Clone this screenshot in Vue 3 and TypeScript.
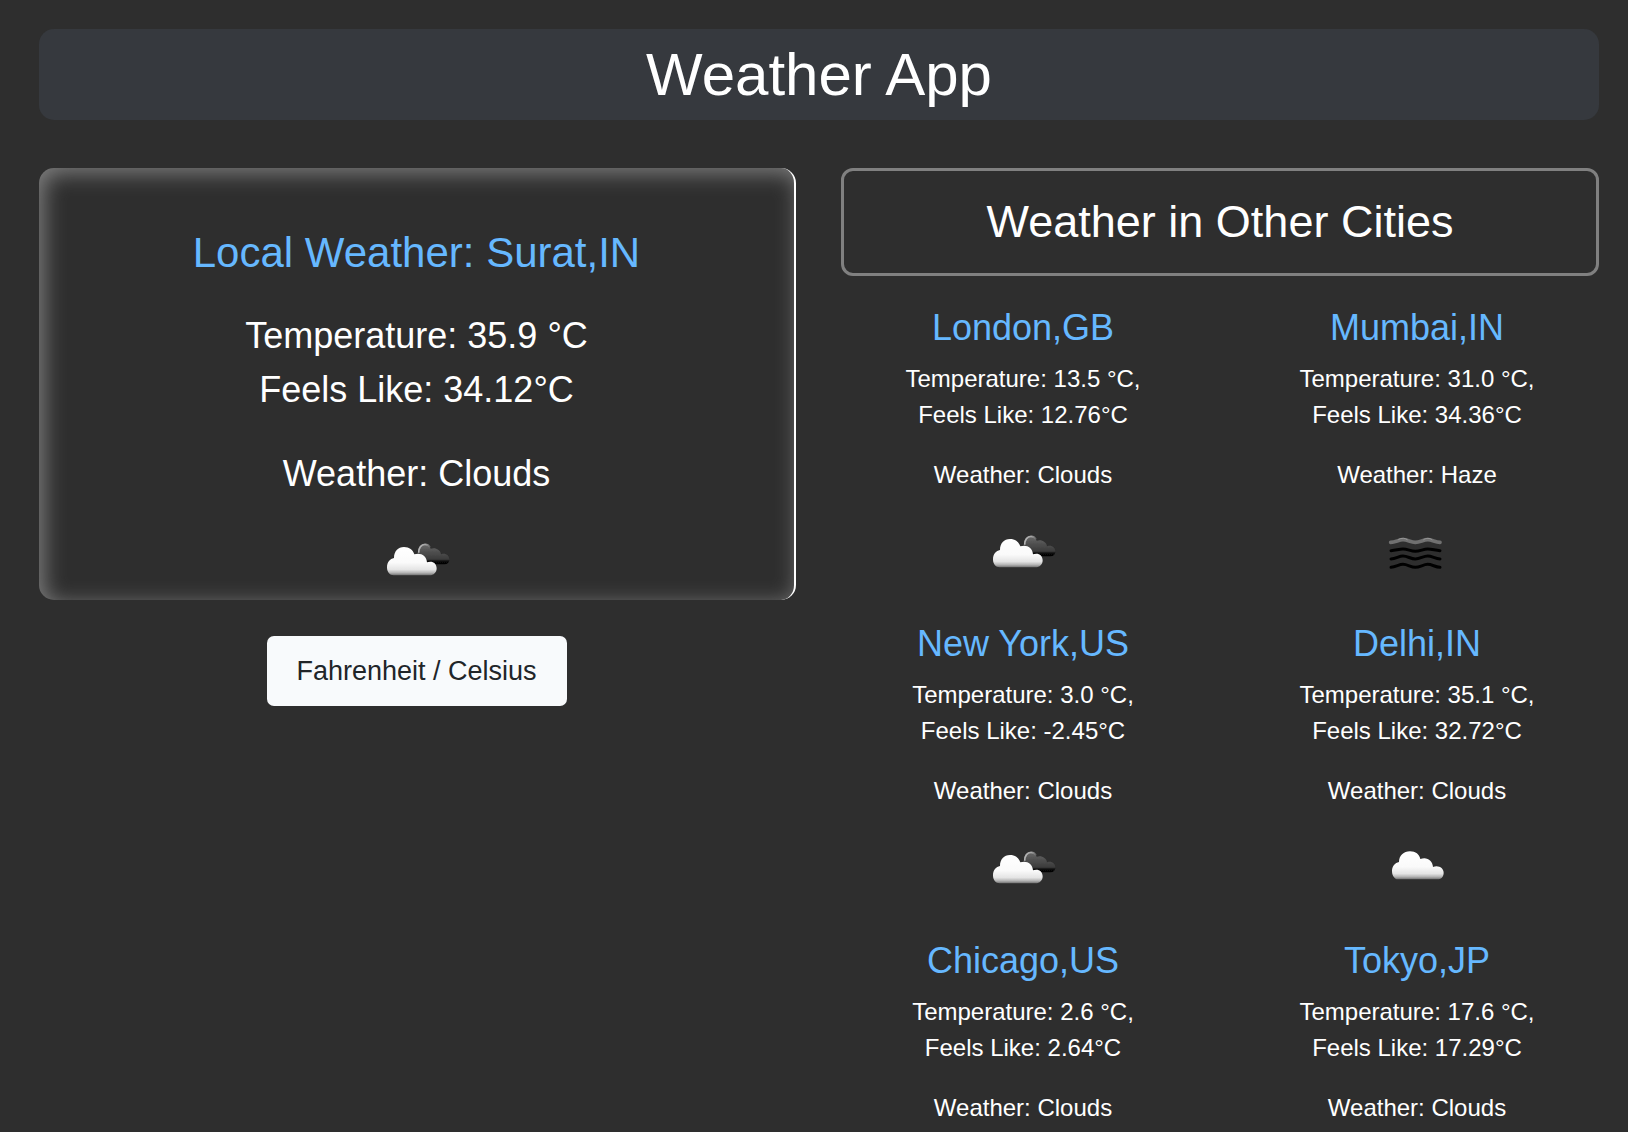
<script setup lang="ts">
import { ref } from 'vue'

type Icon = 'broken' | 'cloud' | 'haze'

interface Report {
  name: string
  temp: number
  feels: number
  weather: string
  icon: Icon
}

const celsius = ref(true)

const local: Report = { name: 'Surat,IN', temp: 35.9, feels: 34.12, weather: 'Clouds', icon: 'broken' }

const cities: Report[] = [
  { name: 'London,GB', temp: 13.5, feels: 12.76, weather: 'Clouds', icon: 'broken' },
  { name: 'Mumbai,IN', temp: 31.0, feels: 34.36, weather: 'Haze', icon: 'haze' },
  { name: 'New York,US', temp: 3.0, feels: -2.45, weather: 'Clouds', icon: 'broken' },
  { name: 'Delhi,IN', temp: 35.1, feels: 32.72, weather: 'Clouds', icon: 'cloud' },
  { name: 'Chicago,US', temp: 2.6, feels: 2.64, weather: 'Clouds', icon: 'broken' },
  { name: 'Tokyo,JP', temp: 17.6, feels: 17.29, weather: 'Clouds', icon: 'broken' },
]

function degrees(value: number, digits: number): string {
  return (celsius.value ? value : value * 1.8 + 32).toFixed(digits)
}
</script>

<template>
  <div class="page">
    <svg class="defs" width="0" height="0" aria-hidden="true">
      <defs>
        <linearGradient id="white" x1="0" y1="0" x2="0" y2="1">
          <stop offset="0" stop-color="#fff" />
          <stop offset="0.55" stop-color="#fafafa" />
          <stop offset="0.8" stop-color="#e4e4e4" />
          <stop offset="0.91" stop-color="#b4b4b4" />
          <stop offset="1" stop-color="#707070" />
        </linearGradient>
        <linearGradient id="dark" x1="0" y1="0" x2="0" y2="1">
          <stop offset="0" stop-color="#6a6a6a" />
          <stop offset="0.35" stop-color="#525252" />
          <stop offset="0.75" stop-color="#3a3a3a" />
          <stop offset="0.86" stop-color="#0a0a0a" />
          <stop offset="1" stop-color="#000" />
        </linearGradient>
        <linearGradient id="rim" x1="0" y1="0" x2="1" y2="0">
          <stop offset="0" stop-color="#b5b5b5" />
          <stop offset="0.6" stop-color="#a5a5a5" />
          <stop offset="1" stop-color="#606060" />
        </linearGradient>
        <filter id="soft" x="-10%" y="-10%" width="120%" height="120%">
          <feGaussianBlur stdDeviation="2" />
        </filter>
        <symbol id="broken" viewBox="68 60 204 114">
          <g filter="url(#soft)">
            <path d="M174 100C173 82 182 72 194 72C203 72 208 77 211 86C224 81 240 88 242 103C256 98 266 106 267 118C267 128 261 133 253 133H190Z" fill="url(#dark)" />
            <path d="M175 98C175 83 183 73 194 73C201 73 206 76 209 82" fill="none" stroke="url(#rim)" stroke-width="5" />
            <path d="M100 166C88 166 80 156 80 142C80 127 89 116 101 114C101 94 113 81 131 81C147 81 158 90 162 103C180 96 199 107 200 127C216 121 229 130 229 145C229 158 220 166 208 166Z" fill="url(#white)" />
          </g>
        </symbol>
        <symbol id="cloud" viewBox="66 41 204 114">
          <path d="M111 135C100 135 93 123 93 110C93 96 102 85 114 83C114 64 128 51 147 51C164 51 175 60 178 74C197 66 215 78 216 98C232 91 248 101 248 115C248 128 240 135 229 135Z" fill="url(#white)" filter="url(#soft)" />
        </symbol>
        <symbol id="haze" viewBox="66 37 204 114">
          <g fill="none" stroke-linecap="round" stroke-linejoin="round" filter="url(#soft)">
            <path d="M89 68C104 67 114 60 126 60C140 60 149 68 163 68C177 68 187 60 200 60C213 60 222 67 237 68" stroke="#707070" stroke-width="11" />
            <path d="M113 59C123 54 131 55 139 60M188 60C197 54 205 55 213 60" stroke="#969696" stroke-width="3" />
            <g stroke="#000" stroke-width="9">
              <path d="M90 93C105 92 114 88 126 88C140 88 149 95 163 95C177 95 187 88 200 88C213 88 222 92 237 93" />
              <path d="M90 118C105 117 114 109 126 109C140 109 149 118 163 118C177 118 187 109 200 109C213 109 222 117 237 118" />
              <path d="M90 143C105 142 114 134 126 134C140 134 149 143 163 143C177 143 187 134 200 134C213 134 222 142 237 143" />
            </g>
          </g>
        </symbol>
      </defs>
    </svg>

    <header class="banner"><h1>Weather App</h1></header>

    <main class="columns">
      <section class="left">
        <div class="local">
          <h3>Local Weather: {{ local.name }}</h3>
          <p>
            Temperature: {{ degrees(local.temp, 1) }} °{{ celsius ? 'C' : 'F' }}<br />
            Feels Like: {{ degrees(local.feels, 2) }}°{{ celsius ? 'C' : 'F' }}
          </p>
          <p>Weather: {{ local.weather }}</p>
          <svg class="icon"><use :href="'#' + local.icon" /></svg>
        </div>
        <button class="toggle" type="button" @click="celsius = !celsius">Fahrenheit / Celsius</button>
      </section>

      <section class="right">
        <div class="others"><h2>Weather in Other Cities</h2></div>
        <div class="cities">
          <article v-for="city in cities" :key="city.name" class="city">
            <h4>{{ city.name }}</h4>
            <p>
              Temperature: {{ degrees(city.temp, 1) }} °{{ celsius ? 'C' : 'F' }},<br />
              Feels Like: {{ degrees(city.feels, 2) }}°{{ celsius ? 'C' : 'F' }}
            </p>
            <p>Weather: {{ city.weather }}</p>
            <svg class="icon"><use :href="'#' + city.icon" /></svg>
          </article>
        </div>
      </section>
    </main>
  </div>
</template>

<style>
body {
  background: #2e2e2e;
}
</style>

<style scoped>
.page {
  box-sizing: border-box;
  height: 1132px;
  padding: 29px 29px 0 39px;
  overflow: hidden;
  background: #2e2e2e;
  color: #fff;
  font-family: "Liberation Sans", Arial, sans-serif;
  font-size: 24px;
  line-height: 36px;
  text-align: center;
}
.defs {
  position: absolute;
}
h1,
h2,
h3,
h4,
p {
  margin: 0;
  font-weight: 400;
}
.banner {
  box-sizing: border-box;
  height: 91px;
  padding-top: 10px;
  border-radius: 15px;
  background: #36393e;
}
h1 {
  font-size: 60px;
  line-height: 72px;
}
.columns {
  display: flex;
  gap: 45px;
  margin-top: 48px;
}
.left {
  width: 757px;
}
.right {
  width: 758px;
}
.local {
  box-sizing: border-box;
  height: 432px;
  padding-top: 60px;
  border-right: 2px solid #fff;
  border-radius: 15px;
  box-shadow: inset 4.5px 4.5px 22px #808080;
  font-size: 36px;
  line-height: 54px;
}
h3 {
  margin-bottom: 31px;
  color: #66b8ff;
  font-size: 42px;
  line-height: 50px;
}
.local p + p {
  margin-top: 30px;
}
.icon {
  display: block;
  width: 68px;
  height: 38px;
  margin: 39px auto 0;
}
.toggle {
  width: 300px;
  height: 70px;
  margin: 36px 2px 0 0;
  padding: 0;
  border: 0;
  border-radius: 7px;
  background: #f8fafc;
  color: #212529;
  font: 27px/40px "Liberation Sans", Arial, sans-serif;
}
.others {
  box-sizing: border-box;
  height: 108px;
  padding-top: 24px;
  border: 3px solid #808080;
  border-radius: 12px;
}
h2 {
  font-size: 45px;
  line-height: 54px;
}
.cities {
  display: grid;
  grid-template-columns: 1fr 1fr;
  grid-auto-rows: 316.3px;
  margin: 30px -15px 0 -15px;
}
h4 {
  margin-bottom: 12px;
  color: #66b8ff;
  font-size: 36px;
  line-height: 43px;
}
.city p + p {
  margin-top: 24px;
}
</style>
